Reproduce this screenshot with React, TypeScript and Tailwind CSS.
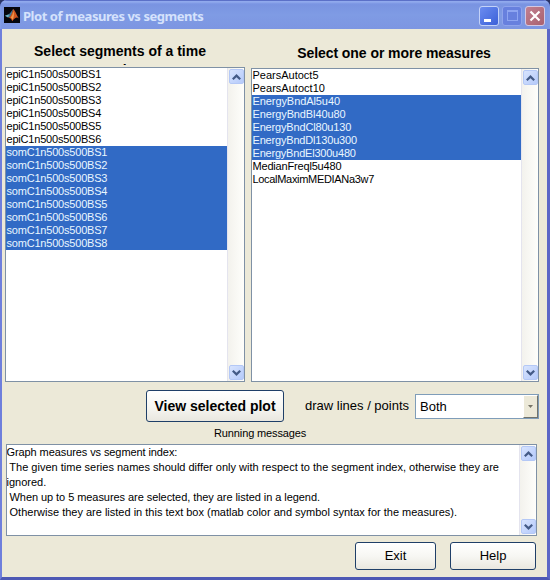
import type { ReactNode } from 'react';

type Item = { name: string; tracking: string };

const segments: Item[] = [
  'epiC1n500s500BS1', 'epiC1n500s500BS2', 'epiC1n500s500BS3', 'epiC1n500s500BS4', 'epiC1n500s500BS5', 'epiC1n500s500BS6',
  'somC1n500s500BS1', 'somC1n500s500BS2', 'somC1n500s500BS3', 'somC1n500s500BS4', 'somC1n500s500BS5', 'somC1n500s500BS6', 'somC1n500s500BS7', 'somC1n500s500BS8',
].map((name) => ({ name, tracking: 'tracking-[-0.2px]' }));

const measures: Item[] = [
  { name: 'PearsAutoct5', tracking: 'tracking-[0px]' },
  { name: 'PearsAutoct10', tracking: 'tracking-[0.02px]' },
  { name: 'EnergyBndAl5u40', tracking: 'tracking-[-0.08px]' },
  { name: 'EnergyBndBl40u80', tracking: 'tracking-[-0.12px]' },
  { name: 'EnergyBndCl80u130', tracking: 'tracking-[-0.17px]' },
  { name: 'EnergyBndDl130u300', tracking: 'tracking-[-0.18px]' },
  { name: 'EnergyBndEl300u480', tracking: 'tracking-[-0.21px]' },
  { name: 'MedianFreql5u480', tracking: 'tracking-[-0.18px]' },
  { name: 'LocalMaximMEDIANa3w7', tracking: 'tracking-[-0.31px]' },
];

function MatlabLogo() {
  return (
    <svg width="16" height="16" viewBox="0 0 16 16" className="shrink-0">
      <rect width="16" height="16" fill="#05060c" />
      <path d="M0.8 8.8 L4.8 7.2 L6.6 8.6 L4 10.6 Z" fill="#6cb6c6" />
      <path d="M4.8 7.2 C6.8 6.2 8 3 9.2 2 L7.4 8.8 L4.5 11 Z" fill="#3f7590" />
      <path d="M9.2 2 C11 3 12.5 8 15 11.5 C12.5 9.5 11 11 8.3 14.2 C7.5 12 6.5 10.5 4.5 11 C7 9.5 8.3 5 9.2 2 Z" fill="#d0561f" />
      <path d="M9.4 4 C10.3 6.5 10.1 10 8.5 13 C8 11.5 7.5 11 6.7 10.6 C8.3 9 9 6.5 9.4 4 Z" fill="#f29a4a" />
    </svg>
  );
}

function ScrollButton({ down = false }: { down?: boolean }) {
  return (
    <div className="flex h-[15px] w-[15px] items-center justify-center rounded-[2px] border border-[#b4c8f6] bg-linear-to-br from-[#d8e4fe] to-[#b5cafa]">
      <svg width="9" height="6" viewBox="0 0 9 6" className={down ? '' : 'rotate-180'}>
        <path d="M0.8 0.8 L4.5 4.4 L8.2 0.8" fill="none" stroke="#435a86" strokeWidth="2.2" />
      </svg>
    </div>
  );
}

function ScrollBar() {
  return (
    <div className="flex w-[17px] shrink-0 flex-col items-center justify-between border-l border-[#e4e4ee] bg-linear-to-r from-[#f3f2ed] to-[#fefefb] py-px">
      <ScrollButton />
      <ScrollButton down />
    </div>
  );
}

function ListBox({ items, from, to, className }: { items: Item[]; from: number; to: number; className: string }) {
  return (
    <div className={`flex border border-[#7f91a5] bg-white ${className}`}>
      <div className="flex-1 overflow-hidden text-[11px]">
        {items.map(({ name, tracking }, i) => (
          <div
            key={name}
            className={`h-[13px] pl-[0.5px] leading-[13px] whitespace-nowrap ${tracking} ${i >= from && i <= to ? 'bg-[#316ac5] text-[#e9f6ff]' : 'text-black'}`}
          >
            {name}
          </div>
        ))}
      </div>
      <ScrollBar />
    </div>
  );
}

function PushButton({ className, children }: { className: string; children: ReactNode }) {
  return (
    <button
      className={`flex items-center justify-center rounded-[3px] border border-[#1f3f68] bg-linear-to-b from-white via-[#f7f7f3] to-[#e9e7df] whitespace-nowrap ${className}`}
    >
      {children}
    </button>
  );
}

function TitleBar() {
  return (
    <div className="flex h-[29px] items-center bg-linear-to-b from-[#7790e0] via-[#7f9be4] to-[#7d96e2] pr-[5px] pl-1 shadow-[inset_0_1px_0_#5b70c8,inset_0_3px_2px_#92abee]">
      <div className="flex flex-1 items-center gap-[3px] pt-px">
        <MatlabLogo />
        <span className="pt-px font-['Noto_Sans'] text-[13px] leading-4 font-bold tracking-[-0.45px] whitespace-nowrap text-[#d5e2fc]">
          Plot of measures vs segments
        </span>
      </div>
      <div className="flex gap-[3px] pt-[2px]">
        <div className="flex h-5 w-5 items-end rounded-[3px] border border-[#c3d2f8] bg-linear-to-br from-[#6b8cf0] to-[#3c60d8] pb-[3px] pl-1">
          <div className="h-[3px] w-[7px] bg-white" />
        </div>
        <div className="flex h-5 w-5 items-center justify-center rounded-[3px] border border-[#8fa4ec] bg-[#6780de]">
          <div className="h-[11px] w-[11px] border border-t-2 border-[#8ea5f1]" />
        </div>
        <div className="flex h-5 w-5 items-center justify-center rounded-[3px] border border-[#d3c8e2] bg-linear-to-br from-[#c18091] to-[#a9616f]">
          <svg width="12" height="12" viewBox="0 0 12 12">
            <path d="M1.5 1.5 L10.5 10.5 M10.5 1.5 L1.5 10.5" stroke="#fff" strokeWidth="2.2" />
          </svg>
        </div>
      </div>
    </div>
  );
}

export default function App() {
  return (
    <div className="h-[580px] w-[550px] overflow-hidden bg-[#2b3566] font-['Liberation_Sans',Arial,sans-serif] text-black">
      <div className="flex h-full flex-col overflow-hidden rounded-t-[7px] bg-[#5560bd]">
        <TitleBar />
        <div className="flex flex-1 flex-col border-r-[3px] border-b-[3px] border-l-2 border-r-[#5b66c6] border-b-[#4d58b4] border-l-[#6f7fdc] bg-[#ece9d8] pl-[3px]">
          <div className="flex gap-[6px]">
            <div className="w-[240px]">
              <div className="mb-[2px] ml-[15px] h-9 w-[200px] overflow-hidden pt-[13px] text-center text-[14px] leading-[18px] font-bold">
                <div className="whitespace-nowrap">Select segments of a time</div>
                <div className="pt-px pl-1">series</div>
              </div>
              <ListBox items={segments} from={6} to={13} className="h-[315px]" />
            </div>
            <div className="w-[288px]">
              <div className="h-[39px] pt-4 pr-[2px] text-center text-[14px] leading-[17px] font-bold tracking-[-0.06px] whitespace-nowrap">
                Select one or more measures
              </div>
              <ListBox items={measures} from={2} to={6} className="h-[314px]" />
            </div>
          </div>

          <div className="mt-2 flex h-8 items-center pl-[141px]">
            <PushButton className="h-8 w-[138px] text-[14px] font-bold">View selected plot</PushButton>
            <span className="ml-[21px] w-[110px] text-[13px] whitespace-nowrap">draw lines / points</span>
            <div className="flex h-[25px] w-[124px] border border-[#7f9db9] bg-white">
              <span className="flex-1 pl-1 text-[13px] leading-[23px]">Both</span>
              <div className="flex w-[15px] items-center justify-center border border-t-white border-r-[#71736c] border-b-[#71736c] border-l-white bg-[#ece9d8]">
                <svg width="5" height="3" viewBox="0 0 5 3">
                  <path d="M0 0 H5 L2.5 3 Z" fill="#777568" />
                </svg>
              </div>
            </div>
          </div>

          <div className="mt-1 h-[18px] pl-[209px] text-[11px] leading-[15px] tracking-[-0.12px] whitespace-nowrap">Running messages</div>

          <div className="ml-px flex h-[92px] w-[531px] border border-[#7f91a5] bg-white">
            <div className="-ml-[0.5px] flex-1 overflow-hidden text-[11px] leading-[15px] whitespace-pre">
              <div className="tracking-[-0.09px]">Graph measures vs segment index:</div>
              <div> The given time series names should differ only with respect to the segment index, otherwise they are</div>
              <div>ignored.</div>
              <div className="tracking-[-0.06px]"> When up to 5 measures are selected, they are listed in a legend.</div>
              <div> Otherwise they are listed in this text box (matlab color and symbol syntax for the measures).</div>
            </div>
            <ScrollBar />
          </div>

          <div className="mt-[6px] flex gap-[14px] pl-[350px] text-[13px]">
            <PushButton className="h-7 w-[81px]">Exit</PushButton>
            <PushButton className="h-7 w-[86px]">Help</PushButton>
          </div>
        </div>
      </div>
    </div>
  );
}
